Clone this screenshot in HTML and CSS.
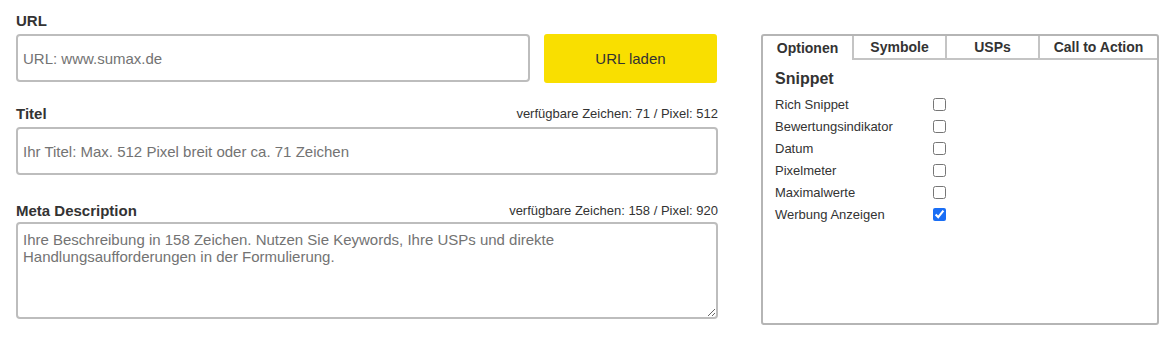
FILE: index.html
```html
<!DOCTYPE html>
<html lang="de">

<head>
    <meta charset="UTF-8" />
    <meta name="viewport" content="width=device-width, initial-scale=1.0" />
    <title>Snippet Generator</title>
    <link rel="stylesheet" href="styles.css">
</head>

<body>
    <div class="page">
        <div class="editor">
            <div class="field-head">
                <label class="field-label" for="url">URL</label>
            </div>
            <div class="url-row">
                <input id="url" class="text-input url-input" type="text" placeholder="URL: www.sumax.de" />
                <button class="load-button">URL laden</button>
            </div>

            <div class="field-head title-head">
                <label class="field-label" for="title">Titel</label>
                <span class="counter">verfügbare Zeichen: 71 / Pixel: 512</span>
            </div>
            <input id="title" class="text-input" type="text" placeholder="Ihr Titel: Max. 512 Pixel breit oder ca. 71 Zeichen" />

            <div class="field-head desc-head">
                <label class="field-label" for="desc">Meta Description</label>
                <span class="counter">verfügbare Zeichen: 158 / Pixel: 920</span>
            </div>
            <textarea id="desc" class="text-input desc-input" placeholder="Ihre Beschreibung in 158 Zeichen. Nutzen Sie Keywords, Ihre USPs und direkte Handlungsaufforderungen in der Formulierung."></textarea>
        </div>

        <div class="options-panel">
            <div class="tabs">
                <div class="tab active">Optionen</div>
                <div class="tab">Symbole</div>
                <div class="tab">USPs</div>
                <div class="tab">Call to Action</div>
            </div>
            <div class="tab-body">
                <h3 class="panel-title">Snippet</h3>
                <label class="option"><span>Rich Snippet</span><input type="checkbox" /></label>
                <label class="option"><span>Bewertungsindikator</span><input type="checkbox" /></label>
                <label class="option"><span>Datum</span><input type="checkbox" /></label>
                <label class="option"><span>Pixelmeter</span><input type="checkbox" /></label>
                <label class="option"><span>Maximalwerte</span><input type="checkbox" /></label>
                <label class="option"><span>Werbung Anzeigen</span><input type="checkbox" checked /></label>
            </div>
        </div>
    </div>
</body>

</html>
```

FILE: styles.css
```css
body {
    margin: 0;
    font-family: "Liberation Sans", Arial, sans-serif;
    color: #333;
    background: #fff;
}

.page {
    display: flex;
    align-items: flex-start;
    padding: 12px 16px 0;
}

.editor {
    width: 702px;
    display: flex;
    flex-direction: column;
}

.field-head {
    display: flex;
    justify-content: space-between;
    align-items: flex-end;
    height: 17px;
    margin-bottom: 5px;
}

.title-head {
    margin-top: 22px;
}

.desc-head {
    margin-top: 27px;
    margin-bottom: 3px;
}

.field-label {
    font-size: 15px;
    font-weight: bold;
    color: #333;
}

.counter {
    font-size: 13px;
    color: #333;
    padding-bottom: 1px;
}

.url-row {
    display: flex;
    gap: 14px;
    align-items: flex-start;
}

.text-input {
    box-sizing: border-box;
    width: 100%;
    height: 48px;
    border: 2px solid #bdbdbd;
    border-radius: 4px;
    padding: 0 5px;
    font-family: "Liberation Sans", Arial, sans-serif;
    font-size: 15px;
    color: #333;
    outline: none;
}

.text-input::placeholder {
    color: #737373;
}

.url-input {
    width: 514px;
}

.load-button {
    width: 173px;
    height: 49px;
    border: none;
    border-radius: 3px;
    background-color: #f9df00;
    color: #333;
    font-family: "Liberation Sans", Arial, sans-serif;
    font-size: 15px;
    cursor: pointer;
}

.desc-input {
    height: 97px;
    padding: 7px 5px 3px;
    line-height: 17px;
    resize: vertical;
}

.options-panel {
    box-sizing: border-box;
    width: 398px;
    height: 291px;
    margin-left: 43px;
    margin-top: 22px;
    border: 2px solid #b5b5b5;
    border-radius: 3px;
}

.tabs {
    display: grid;
    grid-template-columns: 89px 93px 93px 1fr;
    height: 24px;
}

.tab {
    display: flex;
    align-items: center;
    justify-content: center;
    font-size: 14px;
    font-weight: bold;
    color: #333;
    border-left: 2px solid #c4c4c4;
    border-bottom: 2px solid #c4c4c4;
    cursor: pointer;
}

.tab.active {
    border-left: none;
    border-bottom: none;
}

.tab-body {
    padding: 9px 12px 0;
}

.panel-title {
    margin: 0 0 4px;
    font-size: 16px;
    font-weight: bold;
    line-height: 20px;
    color: #333;
}

.option {
    display: flex;
    align-items: center;
    height: 22px;
    font-size: 13px;
    color: #333;
}

.option span {
    width: 158px;
}

.option input {
    margin: 0;
    width: 13px;
    height: 13px;
    accent-color: #1a6ef5;
}
```
